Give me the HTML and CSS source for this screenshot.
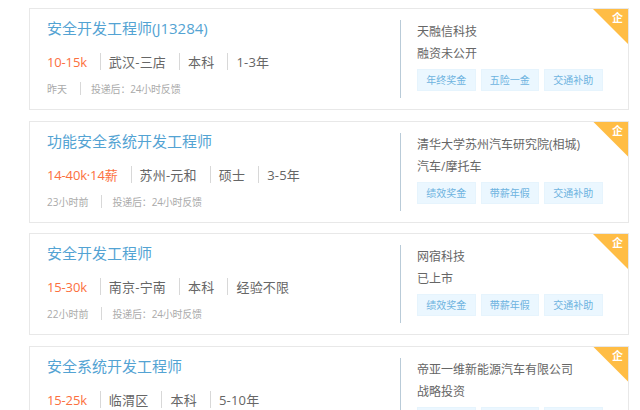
FILE: index.html
```html
<!DOCTYPE html>
<html lang="zh">
<head>
<meta charset="utf-8">
<title>职位列表</title>
<link rel="stylesheet" href="styles.css">
</head>
<body>
<main class="list">
  <article class="card">
    <div class="job">
      <h2 class="title">安全开发工程师(J13284)</h2>
      <div class="meta"><span class="salary">10-15k</span><span class="item">武汉-三店</span><span class="item">本科</span><span class="item">1-3年</span></div>
      <div class="note"><span class="when">昨天</span><span class="reply">投递后：24小时反馈</span></div>
    </div>
    <div class="company">
      <div class="name">天融信科技</div>
      <div class="stage">融资未公开</div>
      <div class="tags"><span class="tag">年终奖金</span><span class="tag">五险一金</span><span class="tag">交通补助</span></div>
    </div>
    <span class="corner"><span class="corner-text">企</span></span>
  </article>
  <article class="card">
    <div class="job">
      <h2 class="title">功能安全系统开发工程师</h2>
      <div class="meta"><span class="salary">14-40k·14薪</span><span class="item">苏州-元和</span><span class="item">硕士</span><span class="item">3-5年</span></div>
      <div class="note"><span class="when">23小时前</span><span class="reply">投递后：24小时反馈</span></div>
    </div>
    <div class="company">
      <div class="name">清华大学苏州汽车研究院(相城)</div>
      <div class="stage">汽车/摩托车</div>
      <div class="tags"><span class="tag">绩效奖金</span><span class="tag">带薪年假</span><span class="tag">交通补助</span></div>
    </div>
    <span class="corner"><span class="corner-text">企</span></span>
  </article>
  <article class="card">
    <div class="job">
      <h2 class="title">安全开发工程师</h2>
      <div class="meta"><span class="salary">15-30k</span><span class="item">南京-宁南</span><span class="item">本科</span><span class="item">经验不限</span></div>
      <div class="note"><span class="when">22小时前</span><span class="reply">投递后：24小时反馈</span></div>
    </div>
    <div class="company">
      <div class="name">网宿科技</div>
      <div class="stage">已上市</div>
      <div class="tags"><span class="tag">绩效奖金</span><span class="tag">带薪年假</span><span class="tag">交通补助</span></div>
    </div>
    <span class="corner"><span class="corner-text">企</span></span>
  </article>
  <article class="card">
    <div class="job">
      <h2 class="title">安全系统开发工程师</h2>
      <div class="meta"><span class="salary">15-25k</span><span class="item">临渭区</span><span class="item">本科</span><span class="item">5-10年</span></div>
    </div>
    <div class="company">
      <div class="name">帝亚一维新能源汽车有限公司</div>
      <div class="stage">战略投资</div>
      <div class="tags"><span class="tag"></span><span class="tag"></span><span class="tag"></span></div>
    </div>
    <span class="corner"><span class="corner-text">企</span></span>
  </article>
</main>
</body>
</html>
```
FILE: styles.css
```css
html, body {
  margin: 0;
  padding: 0;
  height: 410px;
  overflow: hidden;
  background: #fff;
}
body {
  font-family: "Open Sans", "Noto Sans CJK SC", sans-serif;
  color: #555;
}
.list {
  display: flex;
  flex-direction: column;
  gap: 10.5px;
  height: 410px;
  box-sizing: border-box;
  padding: 8px 11px 0 29px;
  overflow: hidden;
}
.card {
  position: relative;
  display: flex;
  flex: none;
  box-sizing: border-box;
  height: 102px;
  border: 1px solid #e8e8e8;
  background: #fff;
}
.job {
  width: 370px;
  flex: none;
  padding: 8px 0 0 17px;
  box-sizing: border-box;
}
.title {
  margin: 0;
  font-size: 15px;
  font-weight: 400;
  line-height: 22px;
  color: #53a3d3;
}
.meta {
  display: flex;
  align-items: center;
  margin-top: 14px;
  height: 17px;
  font-size: 13px;
  color: #666;
}
.salary {
  padding-top: 2px;
  line-height: 15px;
  letter-spacing: -0.15px;
  color: #fc703e;
}
.item {
  margin-left: 13px;
  padding: 2px 0 0 8px;
  border-left: 1px solid #d8d8d8;
  line-height: 15px;
  letter-spacing: 0.2px;
}
.note {
  display: flex;
  align-items: center;
  margin-top: 12px;
  font-size: 10px;
  color: #aaa;
}
.when {
  padding-top: 2px;
  line-height: 11px;
}
.reply {
  margin-left: 13px;
  padding: 2px 0 0 10px;
  border-left: 1px solid #d8d8d8;
  line-height: 11px;
  letter-spacing: -0.2px;
}
.company {
  align-self: flex-start;
  margin-top: 11px;
  height: 78px;
  padding-left: 16px;
  border-left: 1px solid #b9cbd8;
  font-size: 12px;
  color: #666;
}
.name {
  line-height: 16px;
  margin-top: 4px;
}
.stage {
  line-height: 16px;
  margin-top: 6px;
}
.tags {
  display: flex;
  gap: 5px;
  margin-top: 7px;
}
.tag {
  width: 58.5px;
  height: 22px;
  box-sizing: border-box;
  border: 1px solid #e6f4fd;
  background: #ebf7ff;
  color: #6db3e0;
  font-size: 10px;
  line-height: 20px;
  text-align: center;
}
.corner {
  position: absolute;
  top: 0;
  right: 0;
  width: 35px;
  height: 35px;
  background: #ffbd45;
  clip-path: polygon(0 0, 100% 0, 100% 100%);
}
.corner-text {
  position: absolute;
  top: 2px;
  right: 5px;
  font-size: 11px;
  line-height: 14px;
  font-weight: 700;
  color: #fff;
}
```
